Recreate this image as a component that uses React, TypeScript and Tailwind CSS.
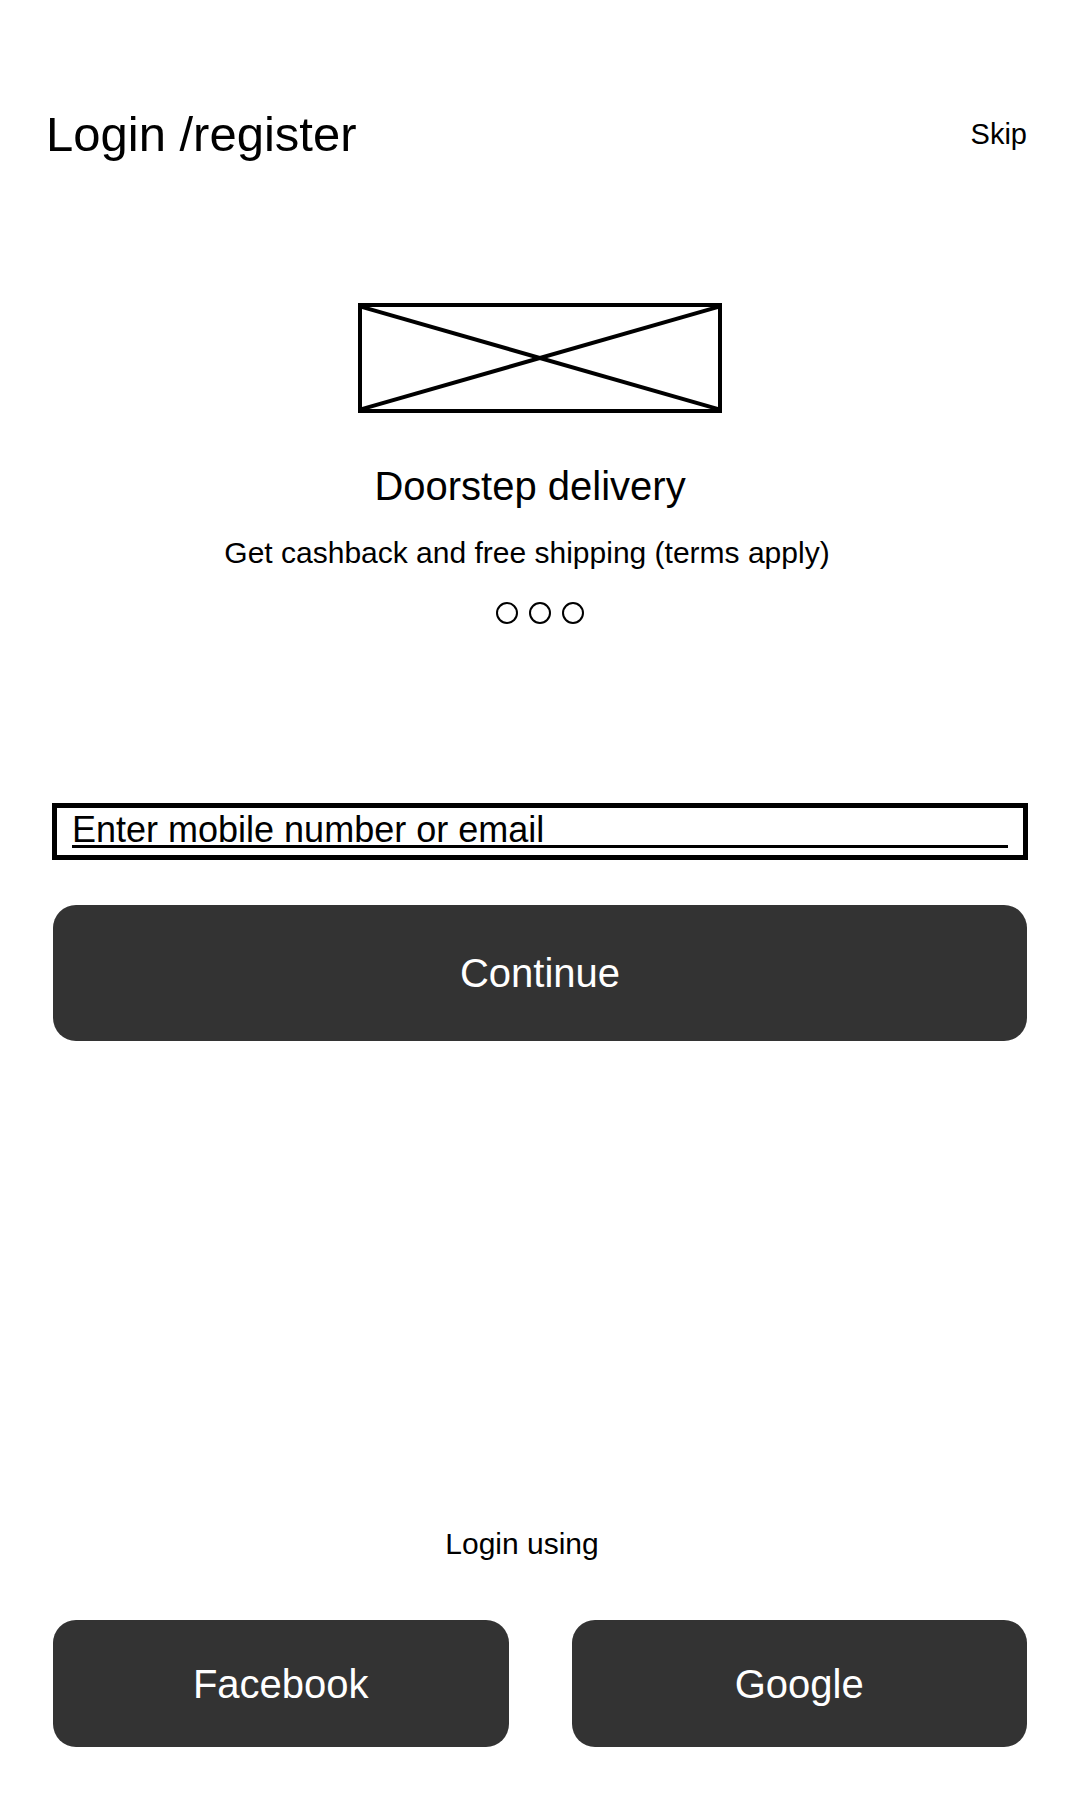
import { useState } from "react";

const slides = [
  { title: "Doorstep delivery", text: "Get cashback and free shipping (terms apply)" },
  { title: "Easy returns", text: "Return within 30 days, no questions asked" },
  { title: "Secure payments", text: "Pay with cards, wallets or cash on delivery" },
];

const ImagePlaceholder = () => (
  <div className="mx-auto mt-[144px] w-[364px] h-[110px] border-4 border-black relative">
    <svg className="absolute inset-0 w-full h-full" viewBox="0 0 100 100" preserveAspectRatio="none">
      <line x1="0" y1="0" x2="100" y2="100" stroke="black" strokeWidth="4" vectorEffect="non-scaling-stroke" />
      <line x1="100" y1="0" x2="0" y2="100" stroke="black" strokeWidth="4" vectorEffect="non-scaling-stroke" />
    </svg>
  </div>
);

export default function App() {
  const [active] = useState(0);
  const [value, setValue] = useState("");
  const slide = slides[active];

  return (
    <div className="w-[1080px] h-[1800px] bg-white flex flex-col text-black font-['Liberation_Sans',Arial,sans-serif]">
      <header className="mt-[110px] h-[49px] flex items-center justify-between pl-[46px] pr-[53px]">
        <h1 className="text-[49px] leading-none">Login /register</h1>
        <button className="text-[29px] leading-none">Skip</button>
      </header>

      <ImagePlaceholder />

      <h2 className="mt-[53px] text-center pr-[20px] text-[40px] leading-none">{slide.title}</h2>
      <p className="mt-[32px] text-center pr-[26px] text-[30px] leading-none">{slide.text}</p>

      <div className="mt-[34px] flex justify-center gap-[11px]">
        {slides.map((s, i) => (
          <span key={s.title} className="w-[22px] h-[22px] rounded-full border-2 border-black" aria-current={i === active} />
        ))}
      </div>

      <div className="mt-[179px] ml-[52px] mr-[52px] h-[57px] border-[5px] border-black px-[15px] pb-[7px]">
        <input
          value={value}
          onChange={(e) => setValue(e.target.value)}
          placeholder="Enter mobile number or email"
          className="w-full h-[40px] pt-[6px] border-b-[3px] border-black bg-transparent outline-none text-[36px] leading-none placeholder:text-black"
        />
      </div>

      <button className="mt-[45px] mx-[53px] h-[136px] rounded-[23px] bg-[#333333] text-white text-[40px] leading-none">
        Continue
      </button>

      <p className="mt-[488px] text-center pr-[36px] text-[30px] leading-none">Login using</p>

      <div className="mt-[61px] mx-[53px] grid grid-cols-2 gap-[63px]">
        <button className="h-[127px] rounded-[23px] bg-[#333333] text-white text-[40px] leading-none">Facebook</button>
        <button className="h-[127px] rounded-[23px] bg-[#333333] text-white text-[40px] leading-none">Google</button>
      </div>
    </div>
  );
}
